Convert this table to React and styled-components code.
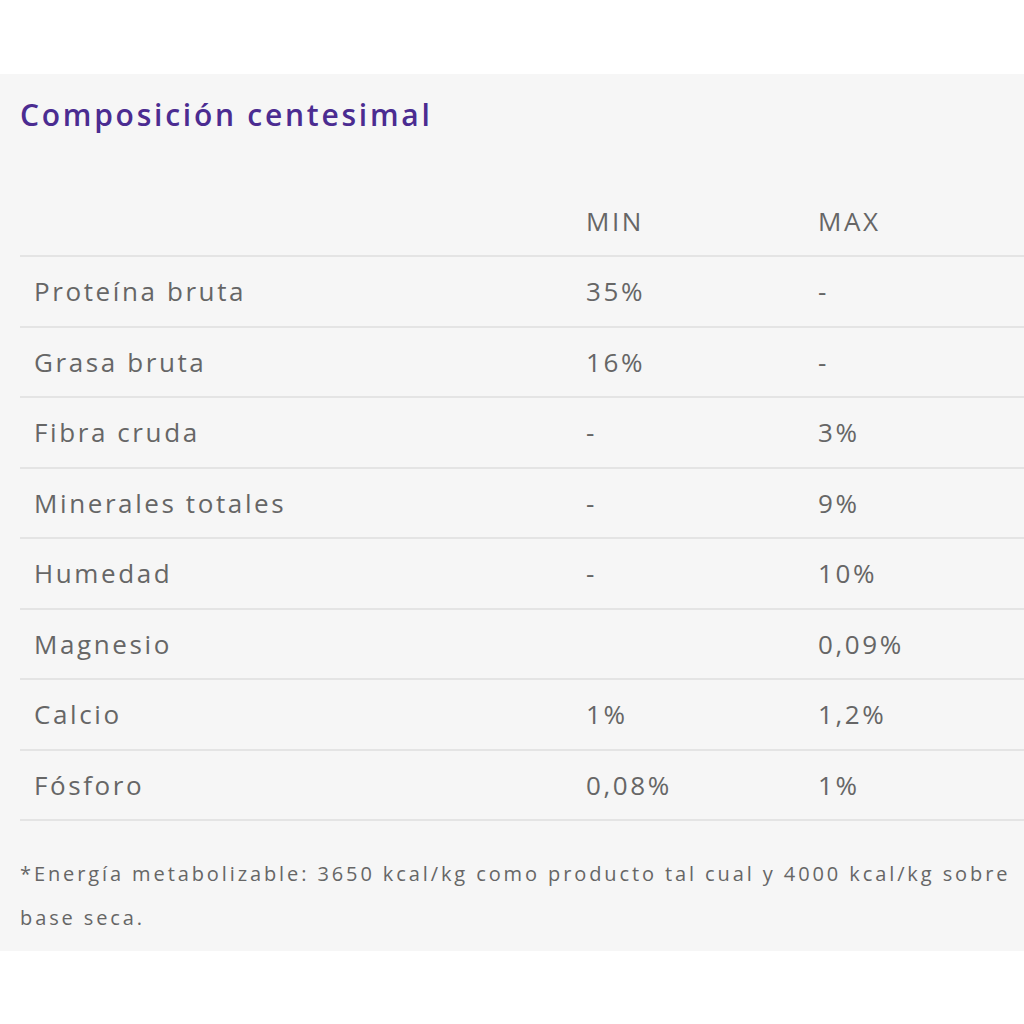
import React from "react";
import { styled, createGlobalStyle } from "styled-components";

const Global = createGlobalStyle`
  html, body {
    margin: 0;
    padding: 0;
    background: #ffffff;
  }
`;

const rows = [
  { name: "Proteína bruta", min: "35%", max: "-" },
  { name: "Grasa bruta", min: "16%", max: "-" },
  { name: "Fibra cruda", min: "-", max: "3%" },
  { name: "Minerales totales", min: "-", max: "9%" },
  { name: "Humedad", min: "-", max: "10%" },
  { name: "Magnesio", min: "", max: "0,09%" },
  { name: "Calcio", min: "1%", max: "1,2%" },
  { name: "Fósforo", min: "0,08%", max: "1%" },
];

function App() {
  return (
    <Page>
      <Global />
      <Panel>
        <Title>Composición centesimal</Title>
        <Table>
          <HeadRow>
            <Cell />
            <Cell>MIN</Cell>
            <Cell>MAX</Cell>
          </HeadRow>
          {rows.map((r) => (
            <Row key={r.name}>
              <Cell $label>{r.name}</Cell>
              <Cell>{r.min}</Cell>
              <Cell>{r.max}</Cell>
            </Row>
          ))}
        </Table>
        <Note>
          *Energía metabolizable: 3650 kcal/kg como producto tal cual y 4000
          kcal/kg sobre base seca.
        </Note>
      </Panel>
    </Page>
  );
}

export default App;

const Page = styled.div`
  padding-top: 74px;
  min-height: 1024px;
  box-sizing: border-box;
  background: #ffffff;
`;

const Panel = styled.div`
  background: #f6f6f6;
  padding: 20px 0 11px 20px;
  font-family: "Open Sans", "DejaVu Sans", sans-serif;
`;

const Title = styled.h2`
  margin: 0;
  height: 82px;
  font-size: 30px;
  font-weight: 600;
  line-height: 42px;
  color: #4b2c91;
  letter-spacing: 2.75px;
`;

const Table = styled.div`
  display: flex;
  flex-direction: column;
`;

const Row = styled.div`
  display: grid;
  grid-template-columns: 566px 232px 1fr;
  align-items: center;
  height: 70.5px;
  border-bottom: 2px solid #e4e4e4;
  box-sizing: border-box;
`;

const HeadRow = styled(Row)`
  height: 81px;
  padding-top: 10px;
`;

const Cell = styled.div`
  font-size: 26px;
  color: #666666;
  letter-spacing: 2.6px;
  padding-left: ${(p) => (p.$label ? "14px" : "0")};
`;

const Note = styled.p`
  margin: 31px 0 0 0;
  font-size: 20px;
  line-height: 44px;
  color: #666666;
  letter-spacing: 2.9px;
  padding-right: 0;
`;
